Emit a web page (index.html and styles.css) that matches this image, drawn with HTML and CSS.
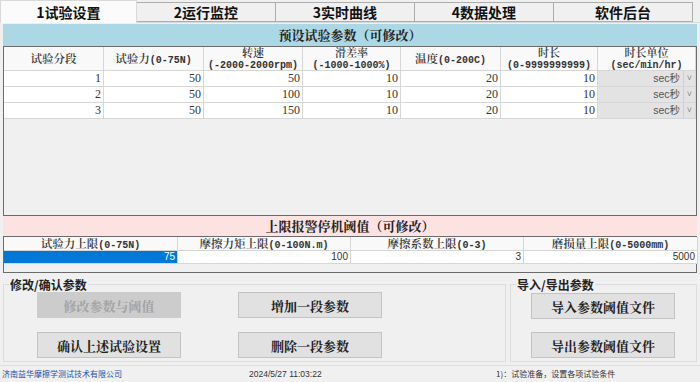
FILE: index.html
```html
<!DOCTYPE html>
<html lang="zh-CN">
<head>
    <meta charset="UTF-8">
    <title>试验设置</title>
    <link rel="stylesheet" href="styles.css">
</head>
<body>
    <div class="tabs">
        <div class="tab active">1试验设置</div>
        <div class="tab">2运行监控</div>
        <div class="tab">3实时曲线</div>
        <div class="tab">4数据处理</div>
        <div class="tab">软件后台</div>
    </div>

    <div class="page">
        <div class="bar bar-blue">预设试验参数（可修改）</div>
        <div class="grid params">
            <div class="hd">试验分段</div>
            <div class="hd">试验力<span class="en">(0-75N)</span></div>
            <div class="hd two">转速<br><span class="en">(-2000-2000rpm)</span></div>
            <div class="hd two">滑差率<br><span class="en">(-1000-1000%)</span></div>
            <div class="hd">温度<span class="en">(0-200C)</span></div>
            <div class="hd two">时长<br><span class="en">(0-9999999999)</span></div>
            <div class="hd two">时长单位<br><span class="en">(sec/min/hr)</span></div>

            <div class="cell">1</div><div class="cell">50</div><div class="cell">50</div><div class="cell">10</div><div class="cell">20</div><div class="cell">10</div>
            <div class="cell combo">sec秒<span class="arrow">˅</span></div>
            <div class="cell">2</div><div class="cell">50</div><div class="cell">100</div><div class="cell">10</div><div class="cell">20</div><div class="cell">10</div>
            <div class="cell combo">sec秒<span class="arrow">˅</span></div>
            <div class="cell">3</div><div class="cell">50</div><div class="cell">150</div><div class="cell">10</div><div class="cell">20</div><div class="cell">10</div>
            <div class="cell combo">sec秒<span class="arrow">˅</span></div>
        </div>

        <div class="bar bar-pink">上限报警停机阈值（可修改）</div>
        <div class="grid limits">
            <div class="hd">试验力上限<span class="en">(0-75N)</span></div>
            <div class="hd">摩擦力矩上限<span class="en">(0-100N.m)</span></div>
            <div class="hd">摩擦系数上限<span class="en">(0-3)</span></div>
            <div class="hd">磨损量上限<span class="en">(0-5000mm)</span></div>
            <div class="cell selected">75</div>
            <div class="cell">100</div>
            <div class="cell">3</div>
            <div class="cell">5000</div>
        </div>

        <div class="groups">
            <fieldset class="group group-left">
                <legend>修改/确认参数</legend>
                <div class="btn-grid">
                    <button class="btn" disabled>修改参数与阈值</button>
                    <button class="btn">增加一段参数</button>
                    <button class="btn">确认上述试验设置</button>
                    <button class="btn">删除一段参数</button>
                </div>
            </fieldset>
            <fieldset class="group group-right">
                <legend>导入/导出参数</legend>
                <div class="btn-col">
                    <button class="btn">导入参数阈值文件</button>
                    <button class="btn">导出参数阈值文件</button>
                </div>
            </fieldset>
        </div>
    </div>

    <div class="status">
        <span class="company">济南益华摩擦学测试技术有限公司</span>
        <span class="time">2024/5/27 11:03:22</span>
        <span class="msg">1)：试验准备，设置各项试验条件</span>
    </div>
</body>
</html>
```

FILE: styles.css
```css
body {
    margin: 0;
    width: 700px;
    height: 382px;
    overflow: hidden;
    background: #f0f0f0;
    font-family: "Noto Sans CJK SC", sans-serif;
    color: #111;
}
.tabs {
    display: flex;
    height: 23px;
    border-bottom: 1px solid #d9d9d9;
    box-sizing: border-box;
}
.tab {
    width: 139px;
    height: 20px;
    margin-top: 2px;
    border: 1px solid #adadad;
    border-left: none;
    box-sizing: border-box;
    background: #f0f0f0;
    font-size: 14px;
    font-weight: bold;
    line-height: 18px;
    text-align: center;
}
.tab.active {
    width: 137px;
    height: 23px;
    margin-top: 0;
    border: 1px solid #d9d9d9;
    border-bottom: none;
    background: #fbfbfb;
    line-height: 22px;
}
.page {
    padding: 1px 3px 0;
    height: 342px;
    box-sizing: border-box;
}
.bar {
    font-family: "Noto Serif CJK SC", "Noto Sans CJK SC", serif;
    font-weight: bold;
    font-size: 13px;
    text-align: center;
    color: #222;
}
.bar-blue {
    height: 22px;
    line-height: 22px;
    background: #acd8e5;
}
.bar-pink {
    height: 20px;
    line-height: 20px;
    background: #fde2e2;
}
.grid {
    display: grid;
    border: 1px solid #6b6b6b;
    background: #f0f0f0;
    box-sizing: border-box;
    align-content: start;
}
.params {
    grid-template-columns: 100px 100px 99px 98px 100px 97px 98px;
    grid-template-rows: 24px 16px 16px 16px;
    height: 170px;
}
.limits {
    grid-template-columns: 174px 173px 173px 174px;
    grid-template-rows: 14px 13px;
    height: 37px;
}
.hd, .cell {
    box-sizing: border-box;
    border-right: 1px solid #d6d6d6;
    border-bottom: 1px solid #d6d6d6;
}
.hd {
    background: #f9f9f9;
    font-family: "Noto Serif CJK SC", "Noto Sans CJK SC", serif;
    font-size: 11.5px;
    font-weight: 600;
    color: #333;
    text-align: center;
    line-height: 22px;
    white-space: nowrap;
}
.hd .en {
    font-family: "Liberation Mono", monospace;
    font-size: 10px;
    font-weight: bold;
}
.hd.two {
    font-size: 11px;
    line-height: 11px;
}
.limits .hd {
    line-height: 12px;
}
.cell {
    background: #fff;
    font-family: "Liberation Serif", serif;
    font-size: 12px;
    line-height: 15px;
    text-align: right;
    padding-right: 2px;
    color: #333;
}
.limits .cell {
    font-family: "Liberation Sans", sans-serif;
    font-size: 10px;
    line-height: 12px;
}
.cell.selected {
    background: #0078d7;
    color: #fff;
}
.cell.combo {
    display: flex;
    justify-content: flex-end;
    background: #e3e3e3;
    font-family: "Liberation Sans", "Noto Sans CJK SC", sans-serif;
    font-size: 10.5px;
    color: #555;
    padding-right: 0;
}
.arrow {
    width: 11px;
    margin-left: 3px;
    border-left: 1px solid #cfcfcf;
    font-size: 9px;
    text-align: center;
    color: #888;
}
.groups {
    display: flex;
    gap: 4px;
    margin-top: 3px;
}
.group {
    margin: 0;
    padding: 0;
    border: 1px solid #dcdcdc;
    height: 86px;
    box-sizing: border-box;
}
.group legend {
    font-weight: bold;
    font-size: 12px;
    padding: 0 1px;
    margin-left: 5px;
    color: #222;
}
.group-left {
    width: 503px;
}
.group-right {
    flex: 1;
}
.btn-grid {
    display: grid;
    grid-template-columns: 144px 146px;
    column-gap: 57px;
    row-gap: 14px;
    padding-left: 33px;
    margin-top: -1px;
}
.btn-col {
    display: flex;
    flex-direction: column;
    gap: 13px;
    padding-left: 20px;
}
.btn {
    width: 144px;
    height: 26px;
    background: #e1e1e1;
    border: 1px solid #c3c3c3;
    font-family: "Noto Serif CJK SC", "Noto Sans CJK SC", serif;
    font-weight: bold;
    font-size: 13px;
    color: #222;
    padding: 0;
}
.btn:disabled {
    background: #cccccc;
    border-color: #cccccc;
    color: #a3a3a3;
}
.status {
    display: flex;
    height: 16px;
    padding-top: 1px;
    border-top: 1px solid #dedede;
    font-size: 8px;
    line-height: 14px;
}
.company {
    color: #1d4fa8;
    width: 247px;
    padding-left: 2px;
}
.time {
    font-family: "Liberation Sans", sans-serif;
    font-size: 8.5px;
    width: 247px;
    color: #333;
}
.msg {
    color: #333;
}
```
